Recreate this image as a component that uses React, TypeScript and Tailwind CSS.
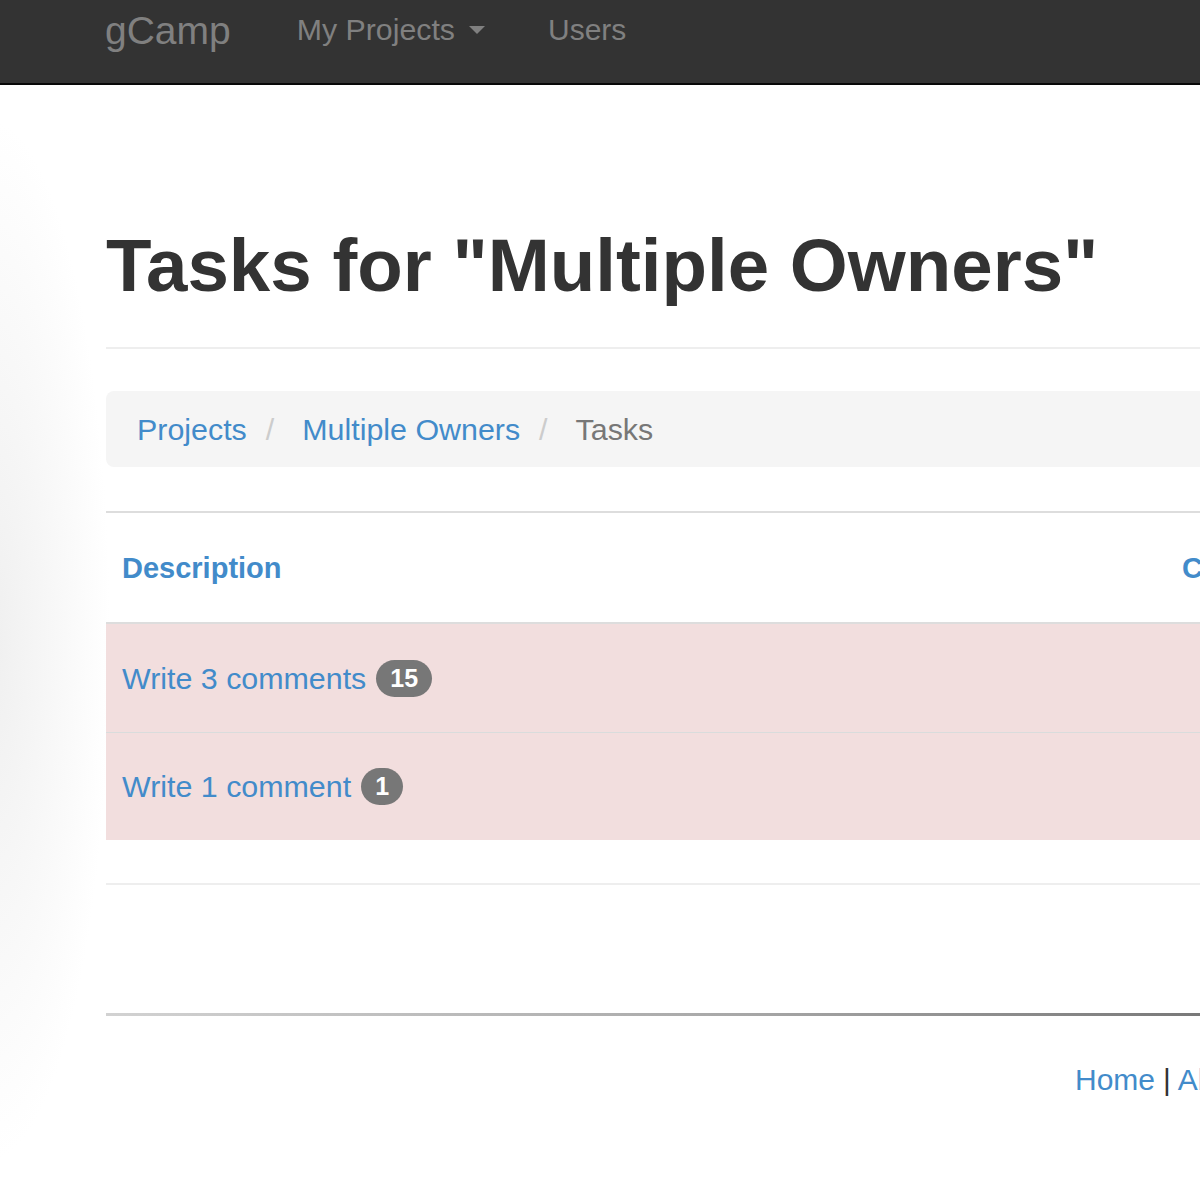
import React from "react";

function Badge({ n }: { n: string }) {
  return (
    <span className="ml-[10px] inline-flex h-[37px] items-center rounded-full bg-[#777777] px-[14px] text-[25px] font-bold leading-none text-white">
      {n}
    </span>
  );
}

export default function App() {
  return (
    <div
      className="min-h-[1204px] w-[1200px] overflow-hidden bg-white bg-[radial-gradient(120px_520px_at_-10px_640px,#efefef,#ffffff)] text-[#333333]"
      style={{ fontFamily: '"Liberation Sans", Arial, Helvetica, sans-serif' }}
    >
      {/* Navbar */}
      <nav className="h-[85px] border-b-2 border-[#080808] bg-[#333333]">
        <div className="flex h-[60px] items-center pl-[105px] text-[#808080]">
          <span className="text-[39px] leading-none">gCamp</span>
          <span className="ml-[66px] flex items-center text-[30.3px] leading-none">
            My Projects
            <svg className="ml-[14px]" width="16" height="8" viewBox="0 0 16 8">
              <polygon points="0,0 16,0 8,8" fill="#808080" />
            </svg>
          </span>
          <span className="ml-[63px] text-[30px] leading-none">Users</span>
        </div>
      </nav>

      {/* Content */}
      <main className="w-[1500px] pl-[106px]">
        <h1 className="mt-[140px] text-[74.5px] font-bold leading-[82px] text-[#333333]">
          Tasks for "Multiple Owners"
        </h1>
        <div className="mt-[40px] h-[2px] bg-[#eeeeee]" />

        <div className="mt-[42px] flex h-[76px] items-center rounded-[8px] bg-[#f5f5f5] pl-[31px] text-[30.4px] leading-none">
          <span className="text-[#428bca]">Projects</span>
          <span className="ml-[19px] mr-[28px] text-[#cccccc]">/</span>
          <span className="text-[#428bca]">Multiple Owners</span>
          <span className="ml-[19px] mr-[28px] text-[#cccccc]">/</span>
          <span className="text-[#777777]">Tasks</span>
        </div>

        {/* Table */}
        <div className="mt-[44px] border-t-2 border-[#dddddd]">
          <div className="grid h-[111px] grid-cols-[1060px_1fr] items-center border-b-2 border-[#dddddd] pt-[2px] text-[29px] font-bold leading-none text-[#428bca]">
            <div className="pl-[16px]">Description</div>
            <div className="pl-[16px]">Complete</div>
          </div>
          <div className="grid h-[109px] grid-cols-[1060px_1fr] items-center border-b-[1px] border-[#d9dcdc] bg-[#f2dede] text-[30.4px] leading-none">
            <div className="flex items-center pl-[16px]">
              <span className="text-[#428bca]">Write 3 comments</span>
              <Badge n="15" />
            </div>
            <div />
          </div>
          <div className="grid h-[107px] grid-cols-[1060px_1fr] items-center bg-[#f2dede] text-[30.4px] leading-none">
            <div className="flex items-center pl-[16px]">
              <span className="text-[#428bca]">Write 1 comment</span>
              <Badge n="1" />
            </div>
            <div />
          </div>
        </div>

        <div className="mt-[43px] h-[2px] bg-[#eeeeee]" />

        {/* Footer */}
        <div className="mt-[128px] h-[3px] bg-[linear-gradient(to_right,#d2d2d2,#a8a8a8_45%,#5a5a5a)]" />
        <div className="mt-[42px] flex h-[43px] items-center pl-[969px] text-[30px] leading-none">
          <span className="text-[#428bca]">Home</span>
          <span className="ml-[8px] mr-[7px] text-[#333333]">|</span>
          <span className="text-[#428bca]">About</span>
          <span className="ml-[8px] mr-[7px] text-[#333333]">|</span>
          <span className="text-[#428bca]">Terms</span>
        </div>
      </main>
    </div>
  );
}
